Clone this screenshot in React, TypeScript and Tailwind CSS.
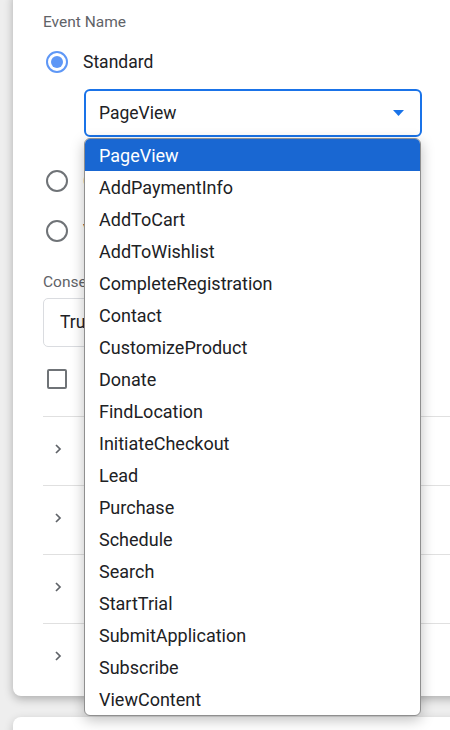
import React from "react";

const EVENTS = [
  "PageView",
  "AddPaymentInfo",
  "AddToCart",
  "AddToWishlist",
  "CompleteRegistration",
  "Contact",
  "CustomizeProduct",
  "Donate",
  "FindLocation",
  "InitiateCheckout",
  "Lead",
  "Purchase",
  "Schedule",
  "Search",
  "StartTrial",
  "SubmitApplication",
  "Subscribe",
  "ViewContent",
];

const SECTIONS = ["Object Properties", "More Settings", "Advanced Settings", "Consent Settings"];

function Radio({ checked }: { checked?: boolean }) {
  return (
    <span
      className={
        checked
          ? "flex h-[22px] w-[22px] shrink-0 items-center justify-center rounded-full border-2 border-[#5e97f6]"
          : "flex h-[22px] w-[22px] shrink-0 items-center justify-center rounded-full border-2 border-[#6f7377]"
      }
    >
      {checked && <span className="h-[12px] w-[12px] rounded-full bg-[#5e97f6]" />}
    </span>
  );
}

function Chevron() {
  return (
    <svg width="8" height="12" viewBox="0 0 8 12" className="shrink-0">
      <path d="M2 2 L6 6 L2 10" fill="none" stroke="#5f6368" strokeWidth="1.7" />
    </svg>
  );
}

export default function App() {
  return (
    <div className="min-h-[730px] overflow-hidden bg-[#eeeeee] pl-[13px] font-['Roboto',sans-serif] text-[#202124]">
      {/* main card, top runs off the viewport */}
      <div className="-mt-[10px] w-[480px] rounded-[8px] bg-white pb-[4px] pl-[30px] pt-[22px] shadow-[0_3px_10px_rgba(0,0,0,0.28)]">
        <p className="h-[20px] text-[15.5px] leading-[20px] text-[#5f6368]">Event Name</p>

        <label className="mt-[10px] flex h-[40px] items-center gap-[15px] pl-[3px]">
          <Radio checked />
          <span className="text-[17.5px]">Standard</span>
        </label>

        <div className="relative ml-[41px] mt-[7px] w-[338px]">
          <div className="flex h-[48px] items-center justify-between rounded-[6px] border-2 border-[#1a73e8] pl-[13px] pr-[16px]">
            <span className="text-[17.5px]">PageView</span>
            <svg width="11" height="6" viewBox="0 0 11 6">
              <path d="M0 0 H11 L5.5 6 Z" fill="#1a73e8" />
            </svg>
          </div>

          {/* open option list */}
          <ul className="absolute left-0 top-[49px] z-10 w-[337px] overflow-hidden rounded-[6px] border border-[#8f8f8f] bg-white shadow-[0_4px_14px_rgba(0,0,0,0.25)]">
            {EVENTS.map((e, i) => (
              <li
                key={e}
                className={
                  i === 0
                    ? "flex h-[32px] items-center bg-[#1967d2] pl-[14px] text-[18px] text-white"
                    : "flex h-[32px] items-center pl-[14px] text-[18px] text-[#202124]"
                }
              >
                {e}
              </li>
            ))}
          </ul>
        </div>

        <label className="mt-[24px] flex h-[40px] items-center gap-[15px] pl-[3px]">
          <Radio />
          <span className="text-[17.5px]">Custom</span>
        </label>
        <label className="mt-[10px] flex h-[40px] items-center gap-[15px] pl-[3px]">
          <Radio />
          <span className="text-[17.5px]">Variable</span>
        </label>

        <p className="mt-[21px] h-[20px] text-[15.5px] leading-[20px] text-[#5f6368]">Consent Granted (GDPR)</p>
        <div className="mt-[6px] flex h-[49px] w-[370px] items-center rounded-[5px] border border-[#dadce0] pl-[16px]">
          <span className="text-[17.5px]">True</span>
        </div>

        <label className="mt-[12px] flex h-[40px] items-center gap-[22px] pl-[4px]">
          <span className="h-[20px] w-[20px] rounded-[2px] border-2 border-[#6f7377]" />
          <span className="text-[17.5px]">Enable Event Enhancement</span>
        </label>

        <div className="mt-[17px]">
          {SECTIONS.map((s) => (
            <div key={s} className="flex h-[69px] items-center gap-[26px] border-t border-[#e0e0e0] pb-[5px] pl-[11px]">
              <Chevron />
              <span className="text-[17.5px]">{s}</span>
            </div>
          ))}
        </div>
      </div>

      <div className="mt-[21px] h-[60px] w-[480px] rounded-[8px] bg-white shadow-[0_3px_10px_rgba(0,0,0,0.2)]" />
    </div>
  );
}
